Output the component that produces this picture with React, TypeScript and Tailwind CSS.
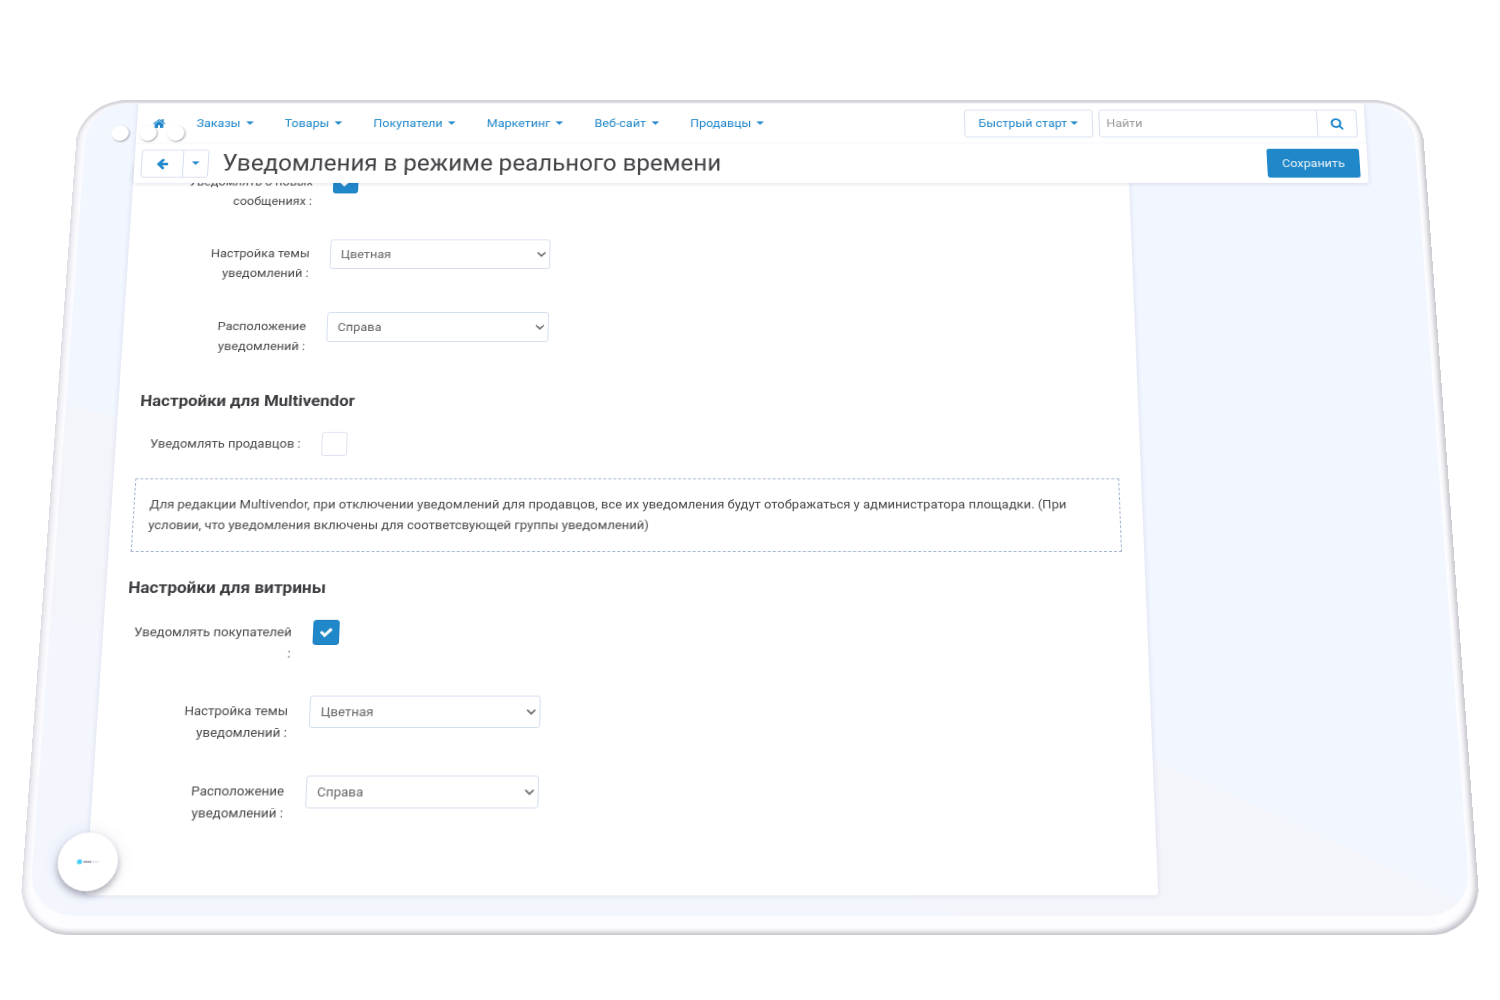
import { useState } from "react";
import type { ReactNode } from "react";

const menu = ["Заказы", "Товары", "Покупатели", "Маркетинг", "Веб-сайт", "Продавцы"];

const icons = {
  home: "M1472 992v480q0 26-19 45t-45 19h-384v-384h-256v384h-384q-26 0-45-19t-19-45v-480q0-1 .5-3t.5-3l575-474 575 474q1 2 1 6zm223-69l-62 74q-8 9-21 11h-3q-13 0-21-7l-692-577-692 577q-12 8-24 7-13-2-21-11l-62-74q-8-10-7-23.5t11-21.5l719-599q32-26 76-26t76 26l244 204v-195q0-14 9-23t23-9h192q14 0 23 9t9 23v408l219 182q10 8 11 21.5t-7 23.5z",
  back: "M1664 896v128q0 53-32.5 90.5t-84.5 37.5h-704l293 294q38 36 38 90t-38 90l-75 76q-37 37-90 37-52 0-91-37l-651-652q-37-37-37-90 0-52 37-91l651-650q38-38 91-38 52 0 90 38l75 74q38 38 38 91t-38 91l-293 293h704q52 0 84.5 37.5t32.5 90.5z",
  search:
    "M1216 832q0-185-131.5-316.5t-316.5-131.5-316.5 131.5-131.5 316.5 131.5 316.5 316.5 131.5 316.5-131.5 131.5-316.5zm512 832q0 52-38 90t-90 38q-54 0-90-38l-343-342q-179 124-399 124-143 0-273.5-55.5t-225-150-150-225-55.5-273.5 55.5-273.5 150-225 225-150 273.5-55.5 273.5 55.5 225 150 150 225 55.5 273.5q0 220-124 399l343 343q37 37 37 90z",
  check:
    "M1671 566q0 40-28 68l-724 724-136 136q-28 28-68 28t-68-28l-136-136-362-362q-28-28-28-68t28-68l136-136q28-28 68-28t68 28l294 295 656-657q28-28 68-28t68 28l136 136q28 28 28 68z",
};

function Icon({ name, className = "" }: { name: keyof typeof icons; className?: string }) {
  return (
    <svg viewBox="0 0 1792 1792" className={`size-3.5 fill-current ${className}`} aria-hidden="true">
      <path d={icons[name]} />
    </svg>
  );
}

function Caret() {
  return (
    <svg viewBox="0 0 9 5" className="h-[5px] w-[9px] shrink-0 fill-current" aria-hidden="true">
      <path d="M.5 .5h8L4.500 4.500z" />
    </svg>
  );
}

function Row({ id, label, children }: { id: string; label: string; children: ReactNode }) {
  return (
    <div className="flex items-start gap-[21px] pl-1">
      <label htmlFor={id} className="w-40 shrink-0 pt-[5px] text-right leading-[22px]">
        {label}
      </label>
      {children}
    </div>
  );
}

function Check({ id, initial }: { id: string; initial: boolean }) {
  const [checked, setChecked] = useState(initial);

  return (
    <span className="relative mt-[3px] block size-[26px]">
      <input
        id={id}
        type="checkbox"
        checked={checked}
        onChange={(e) => setChecked(e.target.checked)}
        className="block size-full appearance-none rounded-[3px] border border-[#dfe1f0] bg-white checked:border-[#1c7fbf] checked:bg-[#2087c9]"
      />
      {checked && (
        <Icon name="check" className="pointer-events-none absolute inset-0 m-auto text-white" />
      )}
    </span>
  );
}

function Select({ id, options }: { id: string; options: string[] }) {
  return (
    <span className="relative block">
      <select
        id={id}
        className="h-[33px] w-[226px] appearance-none rounded-[3px] border border-[#d5deef] bg-white px-2.5 text-[#666]"
      >
        {options.map((option) => (
          <option key={option}>{option}</option>
        ))}
      </select>
      <svg
        viewBox="0 0 10 7"
        className="pointer-events-none absolute top-[13px] right-1 h-[7px] w-2.5"
        aria-hidden="true"
      >
        <path d="M1 1.500l4 4L9 1.500" fill="none" stroke="#66666b" strokeWidth="1.7" />
      </svg>
    </span>
  );
}

function Header() {
  return (
    <header className="relative z-10 mr-[51px] ml-[53px] rounded-b-[3px] bg-white text-[#2087c9] shadow-[0_1px_5px_rgba(60,70,130,0.16)]">
      <div className="flex h-[46px] items-center justify-between border-b border-[#f7f7fb] pr-2 pl-4">
        <nav className="flex items-center gap-8">
          <a href="#home" aria-label="Главная">
            <Icon name="home" />
          </a>
          {menu.map((item) => (
            <a key={item} href="#menu" className="flex items-center gap-[5px]">
              {item}
              <Caret />
            </a>
          ))}
        </nav>
        <div className="flex gap-1.5">
          <button
            type="button"
            className="flex h-8 w-[134px] items-center justify-center gap-[3px] rounded-[3px] border border-[#d5deef]"
          >
            Быстрый старт
            <Caret />
          </button>
          <form className="flex" onSubmit={(e) => e.preventDefault()}>
            <input
              type="search"
              aria-label="Найти"
              placeholder="Найти"
              className="h-8 w-[228px] rounded-l-[3px] border border-[#d5deef] px-[7px] placeholder:text-[#999]"
            />
            <button
              type="submit"
              aria-label="Искать"
              className="flex h-8 w-[41px] items-center justify-center rounded-r-[3px] border border-l-0 border-[#d5deef]"
            >
              <Icon name="search" />
            </button>
          </form>
        </div>
      </div>
      <div className="flex h-[45px] items-center pr-2 pl-[7px]">
        <div className="flex h-8 rounded-[3px] border border-[#d5deef]">
          <button type="button" aria-label="Назад" className="flex w-[42px] items-center justify-center">
            <Icon name="back" />
          </button>
          <button
            type="button"
            aria-label="История"
            className="flex w-[26px] items-center justify-center border-l border-[#d5deef]"
          >
            <Caret />
          </button>
        </div>
        <h1 className="ml-3.5 flex-1 text-[25px] leading-8 text-[#434347]">
          Уведомления в режиме реального времени
        </h1>
        <button type="button" className="h-[33px] w-24 rounded-[3px] bg-[#2087c9] text-white/90">
          Сохранить
        </button>
      </div>
    </header>
  );
}

function Settings() {
  return (
    <main className="-mt-[21px] mr-[299px] ml-[53px] rounded-b-[3px] bg-white px-[22px] pb-[70px] shadow-[0_0_5px_rgba(60,70,130,0.15)]">
      <div className="flex flex-col gap-8 pt-1">
        <Row id="messages" label="Уведомлять о новых сообщениях :">
          <Check id="messages" initial />
        </Row>
        <Row id="admin-theme" label="Настройка темы уведомлений :">
          <Select id="admin-theme" options={["Цветная", "Светлая", "Тёмная"]} />
        </Row>
        <Row id="admin-place" label="Расположение уведомлений :">
          <Select id="admin-place" options={["Справа", "Слева"]} />
        </Row>
      </div>

      <h2 className="mt-9 text-[17px] leading-6 font-bold text-[#3c3c40]">Настройки для Multivendor</h2>
      <div className="mt-[19px]">
        <Row id="vendors" label="Уведомлять продавцов :">
          <Check id="vendors" initial={false} />
        </Row>
      </div>
      <p className="mt-6 border border-dashed border-[#a3b3d1] px-[15px] py-4 leading-[22px]">
        Для редакции Multivendor, при отключении уведомлений для продавцов, все их уведомления будут
        отображаться у администратора площадки. (При условии, что уведомления включены для
        соответсвующей группы уведомлений)
      </p>

      <h2 className="mt-[25px] text-[17px] leading-6 font-bold text-[#3c3c40]">Настройки для витрины</h2>
      <div className="mt-[19px] flex flex-col gap-8">
        <Row id="buyers" label="Уведомлять покупателей :">
          <Check id="buyers" initial />
        </Row>
        <Row id="store-theme" label="Настройка темы уведомлений :">
          <Select id="store-theme" options={["Цветная", "Светлая", "Тёмная"]} />
        </Row>
        <Row id="store-place" label="Расположение уведомлений :">
          <Select id="store-place" options={["Справа", "Слева"]} />
        </Row>
      </div>
    </main>
  );
}

export default function App() {
  return (
    <div className="flex min-h-screen items-center bg-white px-[50px] pb-0.5 font-[Roboto,sans-serif] text-[13px] text-[#4a4a4d] perspective-[3480px]">
      <div className="relative w-full rotate-x-20 rounded-[50px] bg-[#fdfdff] px-[9px] pt-1 pb-[19px] shadow-[inset_0_3px_2px_#d3d3d9,inset_-3px_-3px_5px_#c4c3cb,inset_3px_0_6px_#dddce6]">
        <div className="overflow-hidden rounded-t-[44px] rounded-b-[42px] bg-[radial-gradient(circle_at_-1410px_6200px,#f3f6fd_5811px,#f4f5fb_5812px,#f4f5fb_6029px,#f2f6fe_6030px)] pb-5">
          <Header />
          <Settings />
        </div>

        <div className="absolute top-[29px] left-9 z-20 flex gap-[11px]">
          <span className="size-[18px] rounded-full bg-white shadow-[1px_1px_2px_rgba(60,60,80,0.45)]" />
          <span className="size-[18px] rounded-full bg-white shadow-[1px_1px_2px_rgba(60,60,80,0.45)]" />
          <span className="size-[18px] rounded-full bg-white shadow-[1px_1px_2px_rgba(60,60,80,0.45)]" />
        </div>

        <div className="absolute bottom-[43px] left-[33px] z-20 flex size-[58px] items-center justify-center rounded-full bg-white shadow-[0_4px_6px_rgba(40,40,60,0.35),0_0_16px_rgba(60,70,120,0.12)]">
          <svg viewBox="0 0 22 6" className="h-1.5 w-[22px]" aria-hidden="true">
            <circle cx="3" cy="3" r="2.5" fill="#4ccdf5" />
            <path d="M7 3h7" stroke="#777789" strokeWidth="1.5" strokeDasharray="1.5 .4" />
            <path d="M14 3h8" stroke="#c5c5d2" strokeWidth="1" strokeDasharray="1.5 .5" />
          </svg>
        </div>
      </div>
    </div>
  );
}
